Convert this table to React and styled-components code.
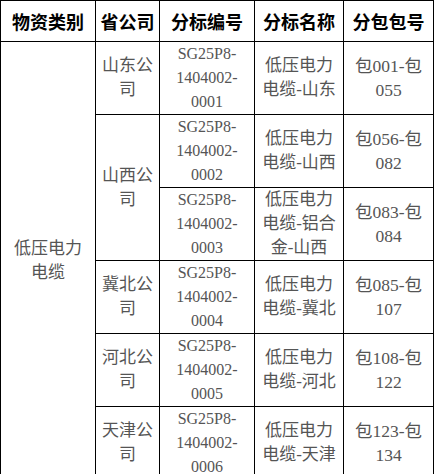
import React from 'react';
import styled, { createGlobalStyle } from 'styled-components';

const GlobalStyle = createGlobalStyle`
  html, body {
    margin: 0;
    padding: 0;
    background: #fff;
  }
`;

const Table = styled.table`
  width: 433px;
  table-layout: fixed;
  border-collapse: collapse;
  font-family: 'Liberation Serif', 'Noto Sans CJK SC', serif;
  font-size: 17px;
  line-height: 24px;
  color: #555;
`;

const HeadCell = styled.th`
  height: 40px;
  padding: 0 4px;
  border: 1px solid #000;
  font-family: 'Noto Sans CJK SC', sans-serif;
  font-size: 18px;
  font-weight: bold;
  color: #000;
  text-align: center;
  vertical-align: middle;
`;

const Cell = styled.td`
  height: 71px;
  padding: 0 ${({ $pad }) => $pad || 6}px;
  border: 1px solid #000;
  text-align: center;
  vertical-align: middle;
  font-size: ${({ $size }) => $size || 17}px;
`;

const columns = [95, 64, 95, 89, 90];
const headers = ['物资类别', '省公司', '分标编号', '分标名称', '分包包号'];

const rows = [
  { company: '山东公司', span: 1, code: 'SG25P8-1404002-0001', name: '低压电力电缆-山东', pack: '包001-包055' },
  { company: '山西公司', span: 2, code: 'SG25P8-1404002-0002', name: '低压电力电缆-山西', pack: '包056-包082' },
  { company: null, code: 'SG25P8-1404002-0003', name: '低压电力电缆-铝合金-山西', pack: '包083-包084' },
  { company: '冀北公司', span: 1, code: 'SG25P8-1404002-0004', name: '低压电力电缆-冀北', pack: '包085-包107' },
  { company: '河北公司', span: 1, code: 'SG25P8-1404002-0005', name: '低压电力电缆-河北', pack: '包108-包122' },
  { company: '天津公司', span: 1, code: 'SG25P8-1404002-0006', name: '低压电力电缆-天津', pack: '包123-包134' },
];

export default function App() {
  return (
    <>
      <GlobalStyle />
      <Table>
        <colgroup>
          {columns.map((w, i) => (
            <col key={i} style={{ width: w }} />
          ))}
        </colgroup>
        <thead>
          <tr>
            {headers.map((h) => (
              <HeadCell key={h}>{h}</HeadCell>
            ))}
          </tr>
        </thead>
        <tbody>
          {rows.map((r, i) => (
            <tr key={r.code}>
              {i === 0 && <Cell rowSpan={rows.length}>低压电力电缆</Cell>}
              {r.company && (
                <Cell rowSpan={r.span} $pad={5}>
                  {r.company}
                </Cell>
              )}
              <Cell $size={16}>{r.code}</Cell>
              <Cell>{r.name}</Cell>
              <Cell $pad={4} $size={17.5}>{r.pack}</Cell>
            </tr>
          ))}
        </tbody>
      </Table>
    </>
  );
}
